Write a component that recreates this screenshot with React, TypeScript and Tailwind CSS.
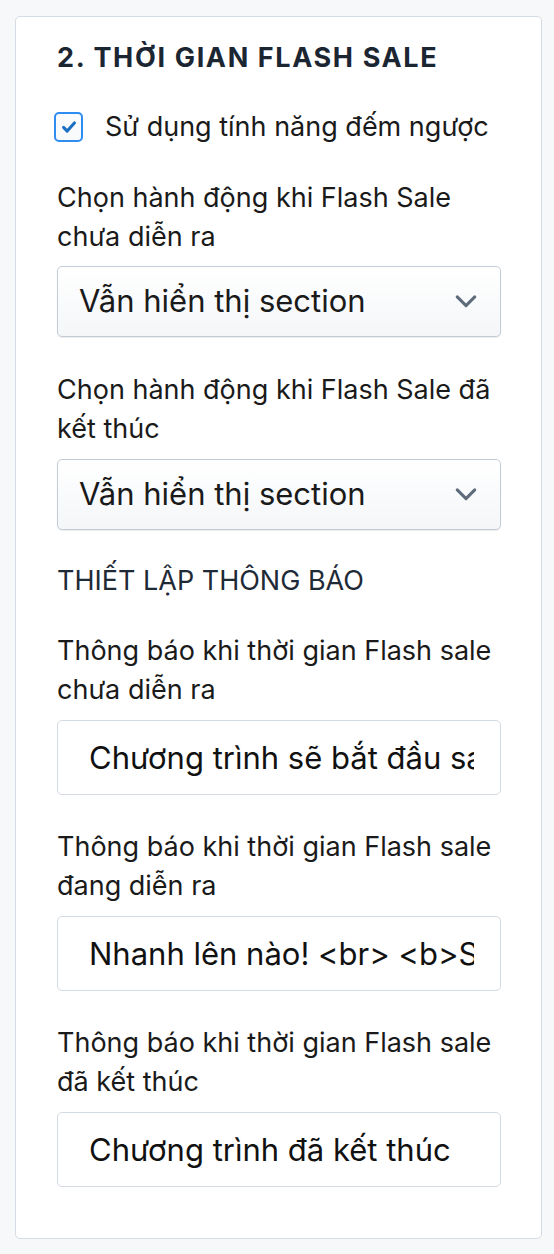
import React from 'react';

const font = { fontFamily: 'Inter, "Noto Sans", sans-serif' };

const Chevron: React.FC = () => (
    <svg className="w-[28px] h-[28px] text-[#5d6b7a]" viewBox="0 0 24 24" fill="none" stroke="currentColor" strokeWidth="2.6" strokeLinecap="round" strokeLinejoin="round">
        <path d="M4.5 8.5l7.5 7.5 7.5-7.5" />
    </svg>
);

const SelectBox: React.FC<{ value: string }> = ({ value }) => (
    <div className="flex items-center justify-between h-[71px] pl-[21px] pr-[20px] rounded-[5px] border border-[#c3ccd6] bg-gradient-to-b from-white to-[#f4f6f8] shadow-[0_1px_1px_rgba(0,0,0,0.08)]">
        <span className="text-[31px] text-[#1a1a1a]">{value}</span>
        <Chevron />
    </div>
);

const TextBox: React.FC<{ value: string }> = ({ value }) => (
    <input
        readOnly
        value={value}
        className="block w-full h-[75px] pl-[31px] pr-[26px] rounded-[5px] border border-[#d3dae2] bg-white text-[31px] text-[#111] outline-none"
        style={font}
    />
);

const Label: React.FC<{ children: React.ReactNode }> = ({ children }) => (
    <p className="text-[27px] leading-[39px] text-[#1a1a1a]">{children}</p>
);

const App: React.FC = () => {
    return (
        <div className="min-h-[1254px] bg-[#f6f8fa] pt-[16px] pl-[15px] pr-[12px]" style={font}>
            <div className="bg-white border border-[#d5dce3] rounded-[5px] pl-[41px] pr-[40px] pt-[24px] pb-[51px]">
                <h2 className="text-[27px] leading-[34px] font-bold tracking-[0.06em] text-[#1c2633]">2. THỜI GIAN FLASH SALE</h2>

                {/* Countdown toggle */}
                <div className="flex items-center gap-[22px] mt-[32px] -ml-[3px]">
                    <div className="w-[29px] h-[30px] rounded-[5px] border-2 border-[#2f8cf0] bg-[#f8fafc] flex items-center justify-center">
                        <svg className="w-[18px] h-[18px] text-[#1b6ec2]" viewBox="0 0 20 20" fill="none" stroke="currentColor" strokeWidth="3.4" strokeLinecap="round" strokeLinejoin="round">
                            <path d="M4 10.5l4 4 8-9" />
                        </svg>
                    </div>
                    <span className="text-[27px] text-[#1a1a1a]">Sử dụng tính năng đếm ngược</span>
                </div>

                <div className="mt-[30px]">
                    <Label>Chọn hành động khi Flash Sale chưa diễn ra</Label>
                    <div className="mt-[10px]"><SelectBox value="Vẫn hiển thị section" /></div>
                </div>

                <div className="mt-[33px]">
                    <Label>Chọn hành động khi Flash Sale đã kết thúc</Label>
                    <div className="mt-[11px]"><SelectBox value="Vẫn hiển thị section" /></div>
                </div>

                <p className="mt-[31px] text-[27px] leading-[39px] text-[#1f2a37]">THIẾT LẬP THÔNG BÁO</p>

                <div className="mt-[31px]">
                    <Label>Thông báo khi thời gian Flash sale chưa diễn ra</Label>
                    <div className="mt-[11px]"><TextBox value="Chương trình sẽ bắt đầu sau" /></div>
                </div>

                <div className="mt-[32px]">
                    <Label>Thông báo khi thời gian Flash sale đang diễn ra</Label>
                    <div className="mt-[11px]"><TextBox value="Nhanh lên nào! <br> <b>Sale sốc</b>" /></div>
                </div>

                <div className="mt-[32px]">
                    <Label>Thông báo khi thời gian Flash sale đã kết thúc</Label>
                    <div className="mt-[11px]"><TextBox value="Chương trình đã kết thúc" /></div>
                </div>
            </div>
        </div>
    );
};

export default App;
